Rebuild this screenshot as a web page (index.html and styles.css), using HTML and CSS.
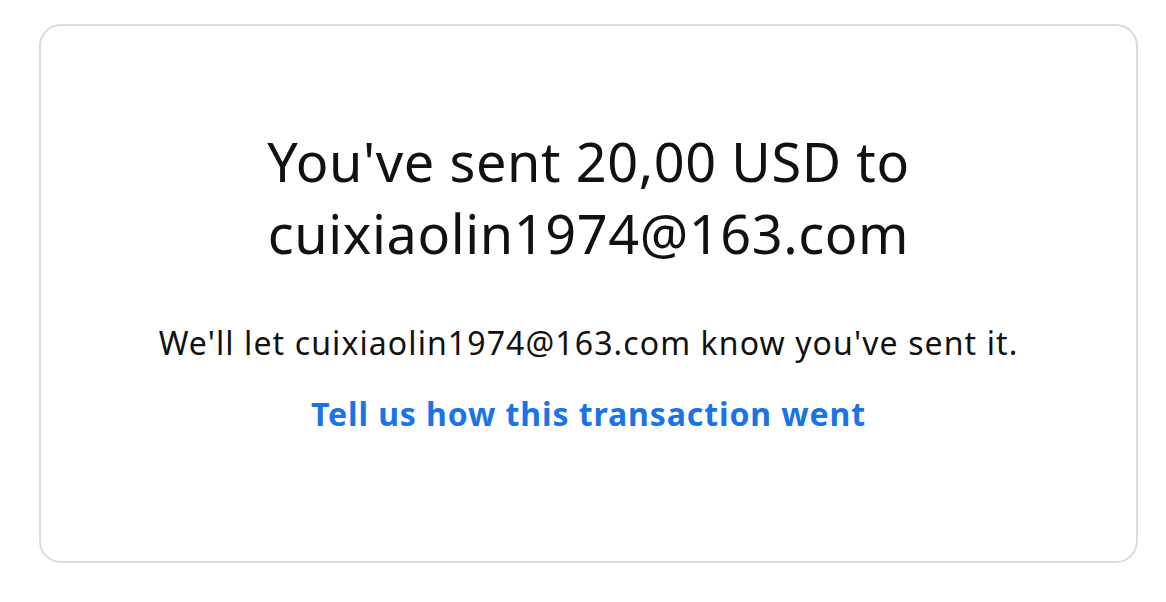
FILE: index.html
```html
<!DOCTYPE html>
<html lang="en">
<head>
<meta charset="utf-8">
<title>Payment sent</title>
<link rel="stylesheet" href="styles.css">
</head>
<body>
<main class="card">
  <h1 class="title">You've sent 20,00 USD to<br>cuixiaolin1974@163.com</h1>
  <p class="note">We'll let cuixiaolin1974@163.com know you've sent it.</p>
  <a class="feedback" href="#">Tell us how this transaction went</a>
</main>
</body>
</html>
```

FILE: styles.css
```css
html, body {
  margin: 0;
  background: #ffffff;
}
body {
  padding: 24px 28px 0 39px;
  font-family: "Noto Sans", "Open Sans", sans-serif;
  color: #111111;
  font-variant-ligatures: none;
}
.card {
  box-sizing: border-box;
  height: 539px;
  border: 2px solid #dedbd3;
  border-radius: 22px;
  display: flex;
  flex-direction: column;
  align-items: center;
  padding-top: 99px;
  text-align: center;
}
.title {
  margin: 0;
  font-size: 54px;
  line-height: 72px;
  font-weight: 400;
  letter-spacing: 0.6px;
}
.note {
  margin: 52px 0 0;
  font-size: 32px;
  line-height: 44px;
  letter-spacing: 1.1px;
}
.feedback {
  margin-top: 27px;
  font-size: 32px;
  line-height: 44px;
  font-weight: 700;
  letter-spacing: 0.9px;
  color: #1a73e8;
  text-decoration: none;
}
```
